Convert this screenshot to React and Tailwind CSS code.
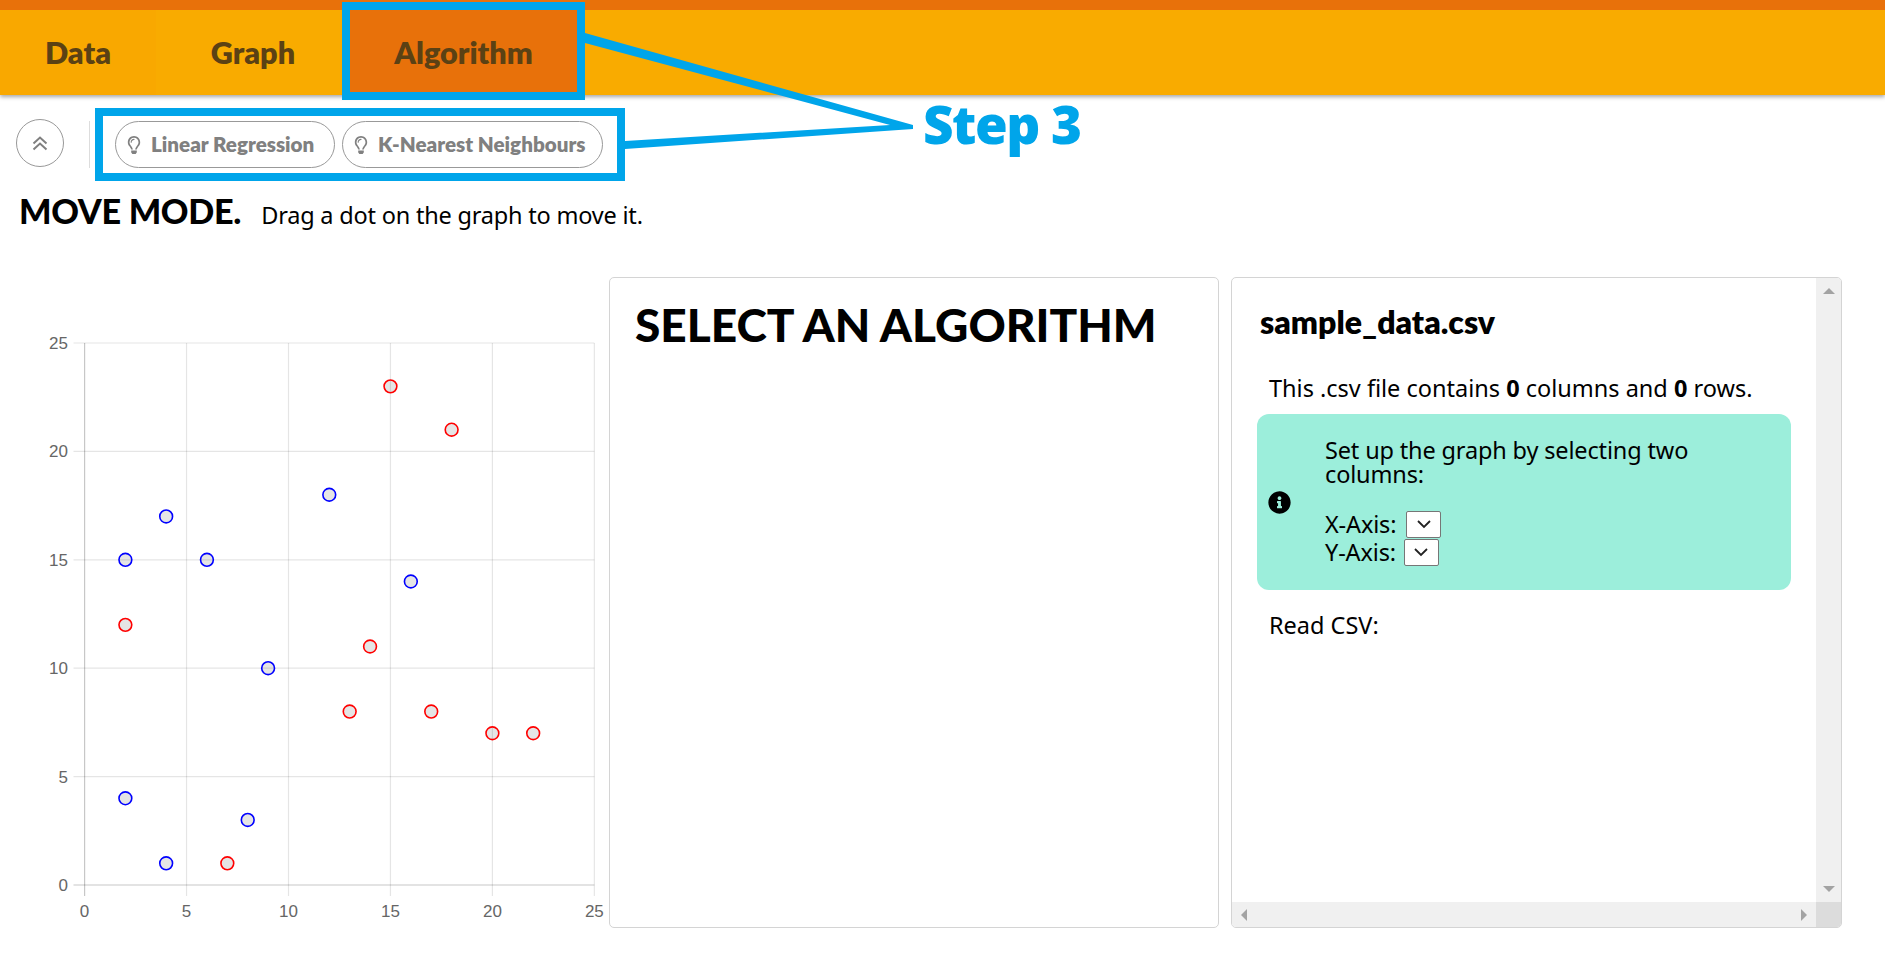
import { FaInfoCircle, FaRegLightbulb } from 'react-icons/fa';

const BLUE_POINTS = [[2, 15], [4, 17], [6, 15], [12, 18], [16, 14], [9, 10], [2, 4], [8, 3], [4, 1]];
const RED_POINTS = [[15, 23], [18, 21], [2, 12], [14, 11], [13, 8], [17, 8], [20, 7], [22, 7], [7, 1]];
const TICKS = [0, 5, 10, 15, 20, 25];

const px = (v) => 84.6 + v * 20.39;
const py = (v) => 608 - v * 21.68;

function Chart() {
  return (
    <svg width="609" height="650" className="block">
      {TICKS.map((t) => (
        <g key={t}>
          <line x1={px(t)} x2={px(t)} y1={py(25)} y2={py(0) + 11} stroke={t === 0 ? 'rgba(0,0,0,0.22)' : 'rgba(0,0,0,0.1)'} strokeWidth="1.2" />
          <line x1={73.5} x2={px(25)} y1={py(t)} y2={py(t)} stroke={t === 0 ? 'rgba(0,0,0,0.22)' : 'rgba(0,0,0,0.1)'} strokeWidth="1.2" />
          <text x={px(t)} y={py(0) + 32} textAnchor="middle" fontSize="17" fill="#666" fontFamily="Liberation Sans, sans-serif">{t}</text>
          <text x={68} y={py(t) + 6} textAnchor="end" fontSize="17" fill="#666" fontFamily="Liberation Sans, sans-serif">{t}</text>
        </g>
      ))}
      {BLUE_POINTS.map(([x, y]) => (
        <circle key={`b${x}-${y}`} cx={px(x)} cy={py(y)} r="6.4" fill="rgba(0,0,0,0.1)" stroke="#0000ff" strokeWidth="1.6" />
      ))}
      {RED_POINTS.map(([x, y]) => (
        <circle key={`r${x}-${y}`} cx={px(x)} cy={py(y)} r="6.4" fill="rgba(0,0,0,0.1)" stroke="#ff0000" strokeWidth="1.6" />
      ))}
    </svg>
  );
}

function Pill({ label, width }) {
  return (
    <button className={`${width} h-[47px] rounded-full border border-[#999] flex items-center pl-[9px] gap-[8px] text-[#808080] text-[20.6px] font-[800] font-['Lato',sans-serif] whitespace-nowrap`}>
      <FaRegLightbulb className="text-[18px] shrink-0" />
      <span>{label}</span>
    </button>
  );
}

function AxisSelect() {
  return (
    <span className="inline-flex w-[35px] h-[27px] bg-white border border-[#767676] rounded-[2px] items-center justify-center align-middle">
      <svg width="16" height="10" viewBox="0 0 16 10"><path d="M2 2 L8 8 L14 2" fill="none" stroke="#222" strokeWidth="1.8" /></svg>
    </span>
  );
}

function Annotations() {
  return (
    <>
      <div className="absolute left-[342px] top-[2px] w-[243px] h-[98px] border-[8px] border-[#00a5ea]" />
      <div className="absolute left-[95px] top-[108px] w-[530px] h-[73px] border-[8px] border-[#00a5ea]" />
      <svg className="absolute left-0 top-0 pointer-events-none" width="1000" height="200">
        <polygon points="585,33 913,125 913,129 625,149 625,141 890,125 585,43" fill="#00a5ea" />
      </svg>
      <span className="absolute left-[923px] top-[90px] text-[#00a5ea] text-[53px] leading-[68px] font-extrabold font-['Open_Sans',sans-serif] tracking-[-1.5px]">Step 3</span>
    </>
  );
}

export default function App() {
  return (
    <div className="relative w-full h-[966px] overflow-hidden bg-white text-black font-['Lato',sans-serif]">
      <header className="h-[95px] bg-[#f9ab00] border-t-[10px] border-[#e8710a] flex shadow-[0_2px_4px_rgba(0,0,0,0.35)] text-[#5b4114] text-[30.6px] font-[800]">
        <div className="w-[156px] flex items-center justify-center bg-[#f9a800]">Data</div>
        <div className="w-[194px] flex items-center justify-center">Graph</div>
        <div className="w-[227px] flex items-center justify-center bg-[#e8710a]">Algorithm</div>
      </header>

      <div className="flex items-start h-[48px] mt-[24px] pl-[16px]">
        <button className="w-[48px] h-[48px] rounded-full border border-[#999] flex items-center justify-center text-[#808080]">
          <svg width="16" height="15" viewBox="0 0 16 15">
            <path d="M1.5 7.5 L8 1.5 L14.5 7.5 M1.5 13.5 L8 7.5 L14.5 13.5" fill="none" stroke="currentColor" strokeWidth="2" />
          </svg>
        </button>
        <div className="w-px h-[47px] mt-[2px] bg-[#ddd] ml-[25px]" />
        <div className="flex gap-[7px] ml-[25px] mt-[2px]">
          <Pill label="Linear Regression" width="w-[220px]" />
          <Pill label="K-Nearest Neighbours" width="w-[261px]" />
        </div>
      </div>

      <div className="flex items-baseline pl-[19px] mt-[18px] h-[50px]">
        <span className="text-[34.2px] font-black tracking-[-0.3px]">MOVE MODE.</span>
        <span className="ml-[20px] text-[23.5px] font-['Noto_Sans',sans-serif] tracking-[-0.2px]">Drag a dot on the graph to move it.</span>
      </div>

      <main className="flex mt-[42px] h-[651px]">
        <div className="w-[609px] shrink-0"><Chart /></div>
        <section className="w-[610px] shrink-0 border border-[#d4d4d4] rounded-[5px] px-[25px] pt-[19px]">
          <h1 className="text-[46px] leading-[56px] font-black whitespace-nowrap">SELECT AN ALGORITHM</h1>
        </section>
        <section className="w-[611px] shrink-0 ml-[12px] border border-[#d4d4d4] rounded-[5px] flex flex-col overflow-hidden">
          <div className="flex flex-1 min-h-0">
            <div className="flex-1 min-w-0 pl-[25px] pr-[25px] pt-[26px]">
              <h2 className="ml-[3px] text-[32px] leading-[36px] font-[800]">sample_data.csv</h2>
              <p className="mt-[34px] ml-[12px] text-[23.5px] leading-[28px] font-['Noto_Sans',sans-serif] whitespace-nowrap">
                This .csv file contains <b>0</b> columns and <b>0</b> rows.
              </p>
              <div className="mt-[12px] h-[176px] w-[534px] bg-[#9ceedb] rounded-[12px] flex items-center pl-[11px] font-['Noto_Sans',sans-serif] text-[23.5px] leading-[24px] tracking-[-0.15px]">
                <FaInfoCircle className="text-[23px] shrink-0" />
                <div className="ml-[34px] w-[400px]">
                  <p>Set up the graph by selecting two columns:</p>
                  <div className="mt-[24px] flex items-center gap-[10px] h-[28px]">X-Axis: <AxisSelect /></div>
                  <div className="flex items-center gap-[8px] h-[28px]">Y-Axis: <AxisSelect /></div>
                </div>
              </div>
              <p className="mt-[21px] ml-[12px] text-[23.5px] leading-[28px] font-['Noto_Sans',sans-serif]">Read CSV:</p>
            </div>
            <div className="w-[25px] shrink-0 bg-[#f0f0f0] flex flex-col items-center justify-between py-[10px]">
              <span className="w-0 h-0 border-x-[6px] border-x-transparent border-b-[6px] border-b-[#a3a3a3]" />
              <span className="w-0 h-0 border-x-[6px] border-x-transparent border-t-[6px] border-t-[#a3a3a3]" />
            </div>
          </div>
          <div className="flex h-[25px] shrink-0">
            <div className="flex-1 bg-[#f0f0f0] flex items-center justify-between px-[9px]">
              <span className="w-0 h-0 border-y-[6px] border-y-transparent border-r-[6px] border-r-[#a3a3a3]" />
              <span className="w-0 h-0 border-y-[6px] border-y-transparent border-l-[6px] border-l-[#a3a3a3]" />
            </div>
            <div className="w-[25px] bg-[#dcdcdc]" />
          </div>
        </section>
      </main>

      <Annotations />
    </div>
  );
}
